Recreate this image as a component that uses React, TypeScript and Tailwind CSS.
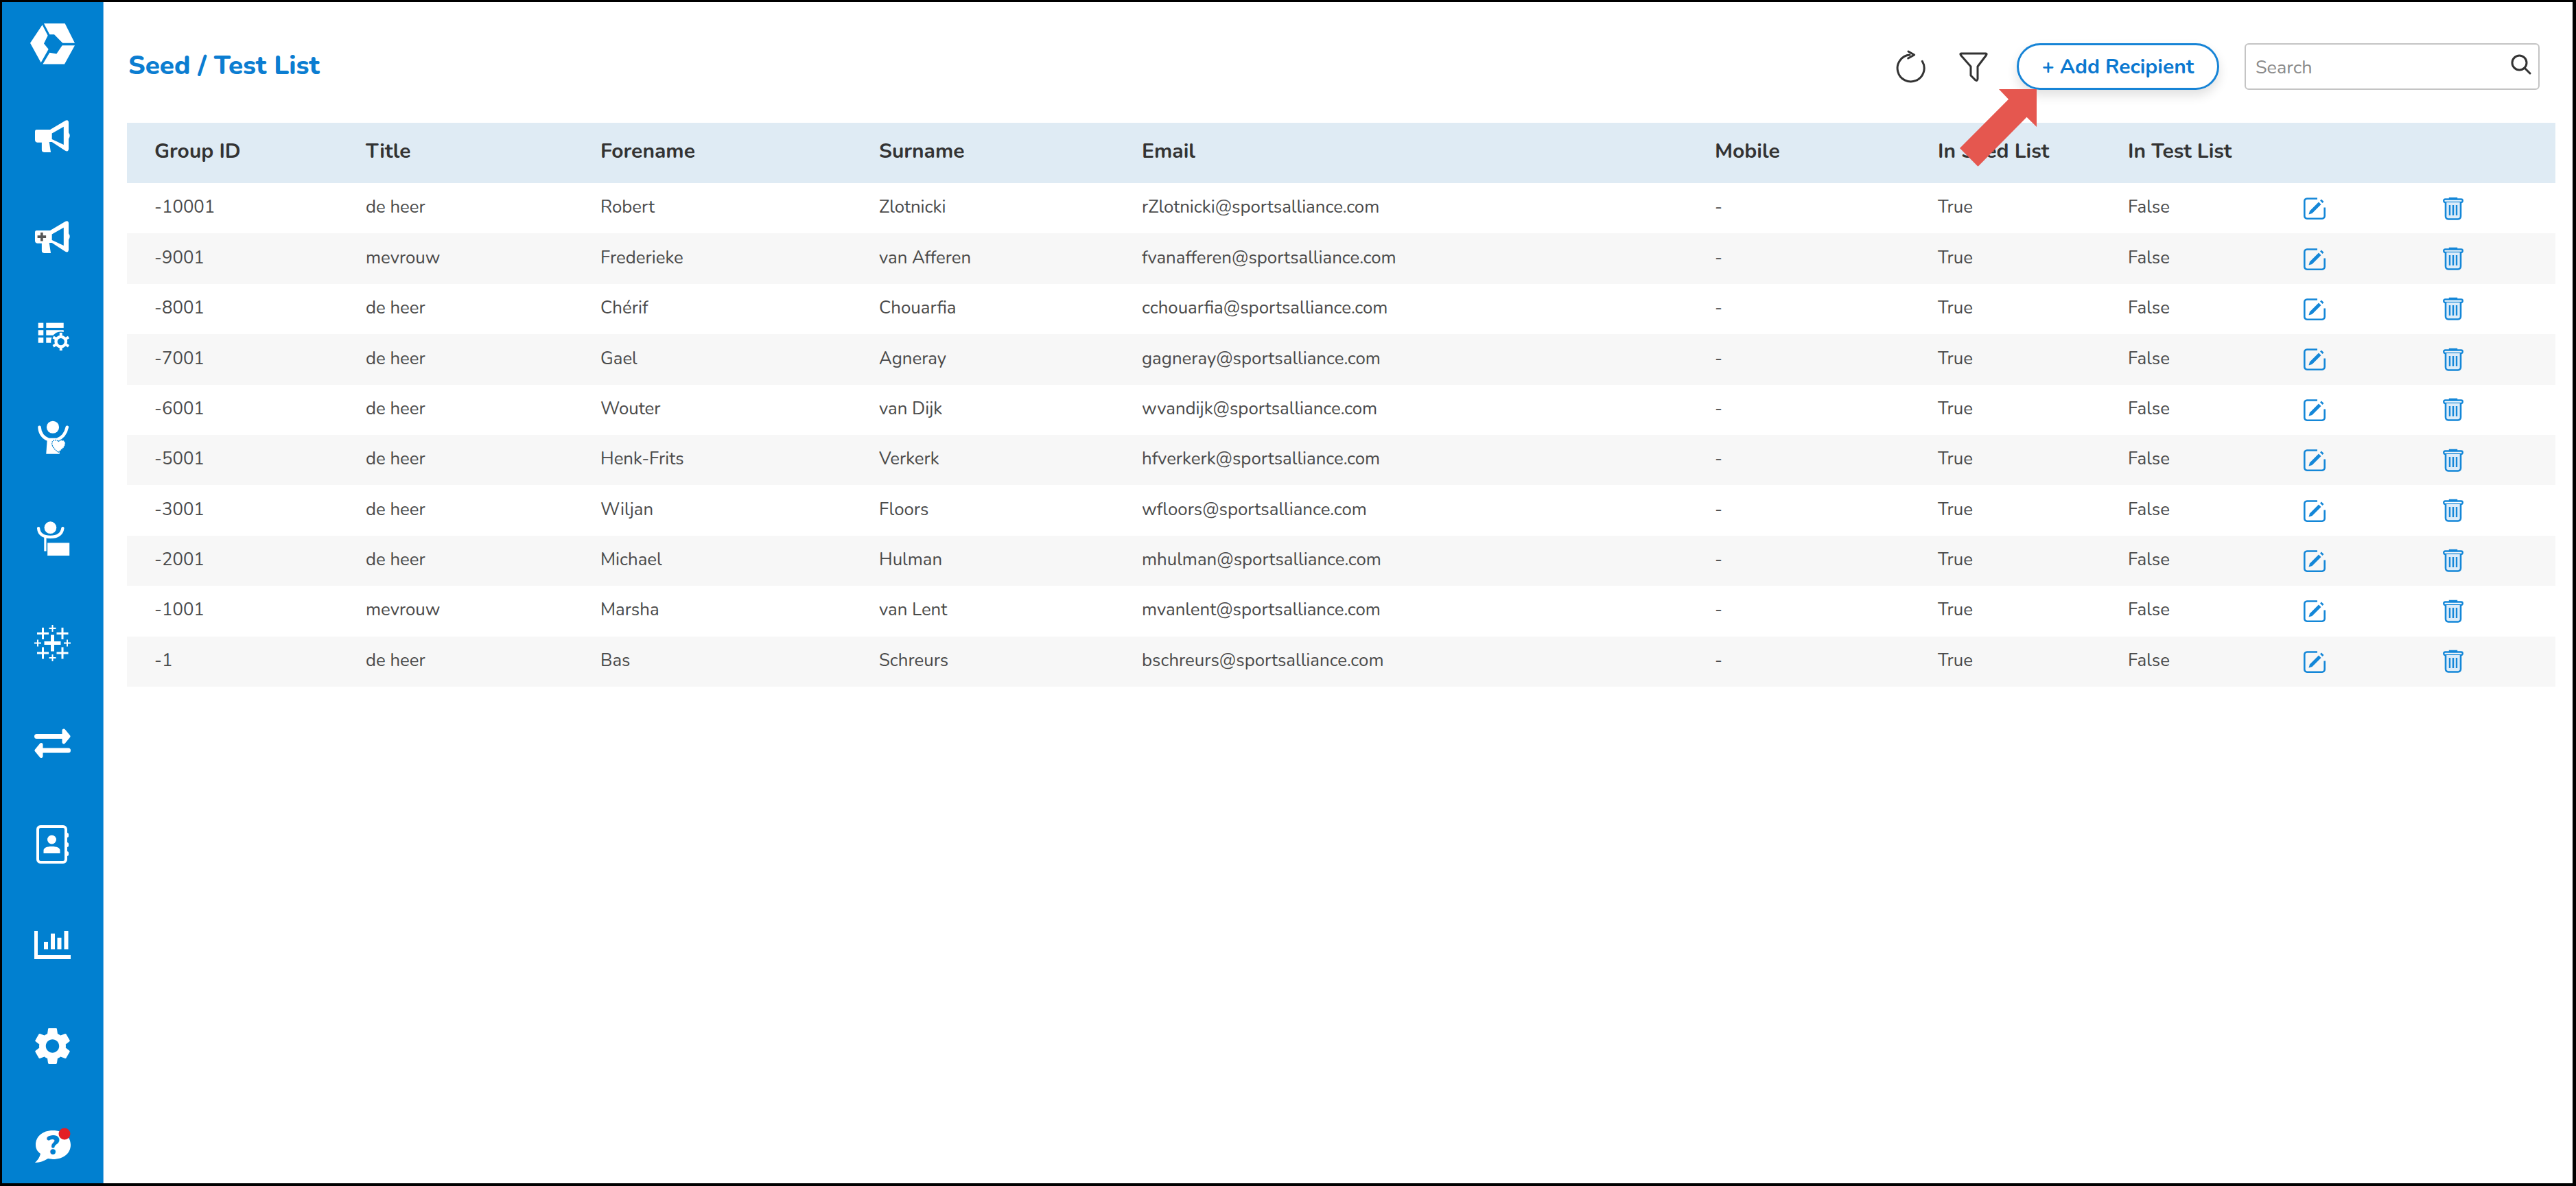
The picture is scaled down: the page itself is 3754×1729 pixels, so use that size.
import React from "react";

const rows = [
  ["-10001", "de heer", "Robert", "Zlotnicki", "rZlotnicki@sportsalliance.com"],
  ["-9001", "mevrouw", "Frederieke", "van Afferen", "fvanafferen@sportsalliance.com"],
  ["-8001", "de heer", "Chérif", "Chouarfia", "cchouarfia@sportsalliance.com"],
  ["-7001", "de heer", "Gael", "Agneray", "gagneray@sportsalliance.com"],
  ["-6001", "de heer", "Wouter", "van Dijk", "wvandijk@sportsalliance.com"],
  ["-5001", "de heer", "Henk-Frits", "Verkerk", "hfverkerk@sportsalliance.com"],
  ["-3001", "de heer", "Wiljan", "Floors", "wfloors@sportsalliance.com"],
  ["-2001", "de heer", "Michael", "Hulman", "mhulman@sportsalliance.com"],
  ["-1001", "mevrouw", "Marsha", "van Lent", "mvanlent@sportsalliance.com"],
  ["-1", "de heer", "Bas", "Schreurs", "bschreurs@sportsalliance.com"],
];

const cols = "grid grid-cols-[308px_342px_406px_383px_835px_325px_277px_256px_203px_1fr] pl-[40px] items-center";

const MEGA =
  "M72 105H132L200 65Q214 60 214 75V118Q224 132 214 146V192Q212 206 198 198L140 160H128L135 205H105Q95 205 95 195V162H75Q65 160 65 150V115Q65 105 72 105ZM140 122V148L192 172V92Z";

function Logo() {
  return (
    <svg viewBox="42 40 201 183" className="w-[67px] h-[62px] fill-white">
      <path d="M98 48L122 95L105 130L125 155L92 213L45 128Z" />
      <path d="M105 42H197L240 128H187L150 90H130Z" />
      <path d="M240 138L195 220H100L130 170L160 175L185 138Z" />
    </svg>
  );
}

function Megaphone({ plus }: { plus?: boolean }) {
  return (
    <svg viewBox="62 60 164 148" className="w-[54px] h-[49px]">
      <path d={MEGA} fill="#fff" fillRule="evenodd" />
      {plus && <path d="M95 114V152M76 133H114" stroke="#555" strokeWidth="11" />}
    </svg>
  );
}

function TableGear() {
  return (
    <svg viewBox="78 513 142 124" className="w-[47px] h-[41px] fill-white">
      <rect x="80" y="515" width="23" height="22" />
      <rect x="115" y="515" width="77" height="22" />
      <rect x="80" y="547" width="23" height="23" />
      <rect x="115" y="547" width="77" height="23" />
      <rect x="80" y="580" width="23" height="23" />
      <rect x="115" y="580" width="40" height="23" />
      <circle cx="180" cy="598" r="44" fill="#0180d0" />
      <circle cx="180" cy="598" r="22" fill="none" stroke="#fff" strokeWidth="13" />
      <path
        d="M180 558V572M180 624V638M146 578L158 585M202 611L214 618M146 618L158 611M202 585L214 578"
        stroke="#fff"
        strokeWidth="12"
      />
    </svg>
  );
}

function PersonHeart() {
  return (
    <svg viewBox="70 40 140 160" className="w-[46px] h-[52px]">
      <circle cx="140" cy="70" r="28" fill="#fff" />
      <path d="M80 70C82 100 100 118 120 126H160C180 118 198 100 204 70" fill="none" stroke="#fff" strokeWidth="14" strokeLinecap="round" />
      <path d="M115 120H165L170 190H110Z" fill="#fff" />
      <path d="M165 182C150 172 136 158 136 142C136 128 156 122 165 135C174 122 196 128 196 142C196 158 180 172 165 182Z" fill="#fff" stroke="#0180d0" strokeWidth="4" strokeDasharray="6 3" />
    </svg>
  );
}

function PersonBoard() {
  return (
    <svg viewBox="76 482 146 156" className="w-[48px] h-[51px] fill-white">
      <circle cx="135" cy="510" r="27" />
      <path d="M82 513C84 540 105 552 135 552C165 552 186 540 190 513" fill="none" stroke="#fff" strokeWidth="13" strokeLinecap="round" />
      <rect x="107" y="552" width="10" height="63" />
      <rect x="122" y="578" width="98" height="57" />
    </svg>
  );
}

function Tableau() {
  const plus = (cx: number, cy: number, h: number, t: number) =>
    `M${cx - h} ${cy - t / 2}H${cx - t / 2}V${cy - h}H${cx + t / 2}V${cy - t / 2}H${cx + h}V${cy + t / 2}H${cx + t / 2}V${cy + h}H${cx - t / 2}V${cy + t / 2}H${cx - h}Z`;
  const d = [
    plus(26.5, 26.5, 12, 5),
    plus(12.5, 12.5, 8.5, 3),
    plus(41, 12.5, 8.5, 3),
    plus(12.5, 41, 8.5, 3),
    plus(41, 41, 8.5, 3),
    plus(26.5, 5, 5, 2),
    plus(26.5, 48, 5, 2),
    plus(5, 26.5, 5, 2),
    plus(48, 26.5, 5, 2),
  ].join("");
  return (
    <svg viewBox="0 0 53 53" className="w-[53px] h-[53px] fill-white">
      <path d={d} />
    </svg>
  );
}

function Arrows() {
  return (
    <svg viewBox="0 0 53 43" className="w-[53px] h-[43px]" fill="none" stroke="#fff" strokeLinecap="round" strokeLinejoin="round">
      <path d="M3.5 11.5H44" strokeWidth="7" />
      <path d="M43 3L50 11.5L43 20Z" strokeWidth="5" fill="#fff" />
      <path d="M49.5 32H9" strokeWidth="7" />
      <path d="M10 23.5L3 32L10 40.5Z" strokeWidth="5" fill="#fff" />
    </svg>
  );
}

function Contact() {
  return (
    <svg viewBox="0 0 48 56" className="w-[48px] h-[56px] fill-white">
      <rect x="2" y="2" width="41" height="52" rx="4" fill="none" stroke="#fff" strokeWidth="4" />
      <rect x="42" y="11" width="5" height="7" rx="2.5" />
      <rect x="42" y="25" width="5" height="7" rx="2.5" />
      <rect x="42" y="38" width="5" height="7" rx="2.5" />
      <circle cx="22.5" cy="21" r="6.5" />
      <path d="M10.5 41V37C10.5 33 15 31 22.5 31C30 31 34.5 33 34.5 37V41Z" />
    </svg>
  );
}

function Chart() {
  return (
    <svg viewBox="0 0 53 41" className="w-[53px] h-[41px] fill-white">
      <path d="M0 0H5V35H53V41H0Z" />
      <rect x="14" y="16" width="6" height="11" />
      <rect x="24" y="4" width="6" height="23" />
      <rect x="33.5" y="10" width="6" height="17" />
      <rect x="43.5" y="0" width="6" height="27" />
    </svg>
  );
}

function Gear() {
  return (
    <svg viewBox="2.6 2 18.8 20" className="w-[51px] h-[54px] fill-white">
      <path d="M19.14 12.94c.04-.3.06-.61.06-.94 0-.32-.02-.64-.07-.94l2.03-1.58c.18-.14.23-.41.12-.61l-1.92-3.32c-.12-.22-.37-.29-.59-.22l-2.39.96c-.5-.38-1.03-.7-1.62-.94l-.36-2.54c-.04-.24-.24-.41-.48-.41h-3.84c-.24 0-.43.17-.47.41l-.36 2.54c-.59.24-1.13.57-1.62.94l-2.39-.96c-.22-.08-.47 0-.59.22L2.74 8.87c-.12.21-.08.47.12.61l2.03 1.58c-.05.3-.09.63-.09.94s.02.64.07.94l-2.03 1.58c-.18.14-.23.41-.12.61l1.92 3.32c.12.22.37.29.59.22l2.39-.96c.5.38 1.03.7 1.62.94l.36 2.54c.05.24.24.41.48.41h3.84c.24 0 .44-.17.47-.41l.36-2.54c.59-.24 1.13-.56 1.62-.94l2.39.96c.22.08.47 0 .59-.22l1.92-3.32c.12-.22.07-.47-.12-.61l-2.01-1.58zM12 15.6c-1.98 0-3.6-1.62-3.6-3.6s1.62-3.6 3.6-3.6 3.6 1.62 3.6 3.6-1.62 3.6-3.6 3.6z" />
    </svg>
  );
}

function Help() {
  return (
    <svg viewBox="0 0 53 52" className="w-[53px] h-[52px]">
      <path d="M26 4C11 4 1 13 1 25C1 31 4 35 8 38C7 43 4 47 0 51C7 51 14 48 19 45C21 45 24 46 26 46C42 46 52 37 52 25C52 13 42 4 26 4Z" fill="#fff" />
      <text x="26" y="39" textAnchor="middle" fontFamily="Nunito, Lato, sans-serif" fontWeight="900" fontSize="39" fill="#0180d0">?</text>
      <circle cx="43" cy="9" r="8.5" fill="#e31e24" />
    </svg>
  );
}

function EditIcon() {
  return (
    <svg viewBox="0 0 32 32" className="w-[32px] h-[32px] mt-[3px]" fill="none" stroke="#1487d8">
      <path d="M20 1.500H5A3.800 3.800 0 0 0 1.300 5.500V27A3.800 3.800 0 0 0 5 30.700H27A3.800 3.800 0 0 0 30.700 27V14.500" strokeWidth="2.600" />
      <path d="M7.500 24.500L9 19.500L22 6.500L25.500 10L12.500 23Z" fill="#1487d8" stroke="none" />
      <path d="M24 4.500L26 2.500L29.500 6L27.500 8Z" fill="#1487d8" stroke="none" />
    </svg>
  );
}

function TrashIcon() {
  return (
    <svg viewBox="0 0 30 34" className="w-[30px] h-[34px] mt-[2px]" fill="none" stroke="#1487d8">
      <path d="M10 3V2H20V3" strokeWidth="2.400" />
      <rect x="1.200" y="3.500" width="27.600" height="4.500" rx="2.200" strokeWidth="2.400" />
      <path d="M4 8V28A4 4 0 0 0 8 32.500H22A4 4 0 0 0 26 28V8" strokeWidth="2.600" fill="#dcecf9" />
      <path d="M10 12V27M15 12V27M20 12V27" strokeWidth="2.400" />
    </svg>
  );
}

export default function App() {
  return (
    <div className="w-[3754px] h-[1729px] flex bg-white border-t-[3px] border-l-[3px] border-r-[5px] border-b-[4px] border-black overflow-hidden font-['Nunito','Lato',sans-serif]">
      <aside className="w-[148px] shrink-0 h-full bg-[#0180d0] border-r border-r-[#5aa9e0] flex flex-col items-center">
        <div className="mt-[30px]"><Logo /></div>
        <div className="mt-[79px]"><Megaphone /></div>
        <div className="mt-[98px]"><Megaphone plus /></div>
        <div className="mt-[100px] ml-[3px]"><TableGear /></div>
        <div className="mt-[102px]"><PersonHeart /></div>
        <div className="mt-[95px] ml-[3px]"><PersonBoard /></div>
        <div className="mt-[100px]"><Tableau /></div>
        <div className="mt-[98px]"><Arrows /></div>
        <div className="mt-[98px]"><Contact /></div>
        <div className="mt-[98px]"><Chart /></div>
        <div className="mt-[100px]"><Gear /></div>
        <div className="mt-[92px] ml-[1px]"><Help /></div>
      </aside>

      <main className="relative flex-1 pl-[34px] pr-[25px] pt-[60px]">
        <header className="flex items-center h-[68px]">
          <h1 className="ml-[2px] text-[38.5px] font-extrabold text-[#0b7dd1] leading-none pb-[2px]">Seed / Test List</h1>
          <div className="ml-auto mr-[23px] flex items-center">
            <svg viewBox="0 0 44 50" className="w-[44px] h-[50px]" fill="none" stroke="#333" strokeWidth="3" strokeLinecap="round" strokeLinejoin="round">
              <path d="M20 8A19.500 19.500 0 1 0 38.300 17.300" />
              <path d="M18 3L26.700 8L17.700 13" />
            </svg>
            <svg viewBox="0 0 42 46" className="w-[42px] h-[46px] ml-[48px]" fill="none" stroke="#333" strokeWidth="3" strokeLinejoin="round" strokeLinecap="round">
              <path d="M3 4H39Q41 4 39.500 6.500L27 23V41Q26 46 22 41L17 36V23L2.500 6.500Q1 4 3 4Z" />
            </svg>
            <button className="ml-[42px] w-[295px] h-[68px] rounded-full border-[3px] border-[#1784d6] bg-white text-[#0b78d0] text-[30px] font-bold shadow-[0_8px_16px_rgba(0,0,0,0.12)]">
              + Add Recipient
            </button>
            <div className="ml-[37px] w-[430px] h-[68px] flex items-center rounded-[6px] border-2 border-[#c4c4c4] pl-[14px] pr-[10px] text-[27px] text-[#8a8a8a]">
              <span className="pt-[4px]">Search</span>
              <svg viewBox="0 0 30 30" className="ml-auto w-[30px] h-[30px] mb-[6px]" fill="none" stroke="#333" strokeWidth="3" strokeLinecap="round">
                <circle cx="12.500" cy="12.500" r="10.500" />
                <path d="M20.500 20.500L28 28" />
              </svg>
            </div>
          </div>
        </header>

        <section className="mt-[48px]">
          <div className={`${cols} h-[88px] bg-[#dfebf4] text-[30px] font-bold text-[#333] pb-[6px]`}>
            <span>Group ID</span>
            <span>Title</span>
            <span>Forename</span>
            <span>Surname</span>
            <span>Email</span>
            <span>Mobile</span>
            <span>In Seed List</span>
            <span>In Test List</span>
          </div>
          {rows.map((r, i) => (
            <div key={r[0]} className={`${cols} h-[73.4px] text-[25.8px] text-[#4a4a4a] pb-[2px] ${i % 2 === 1 ? "bg-[#f7f7f7]" : "bg-white"}`}>
              {r.map((c) => (
                <span key={c}>{c}</span>
              ))}
              <span>-</span>
              <span>True</span>
              <span>False</span>
              <EditIcon />
              <TrashIcon />
            </div>
          ))}
        </section>

        <svg viewBox="0 0 112 113" className="absolute left-[2705px] top-[127px] w-[112px] h-[113px]">
          <path d="M57 0H112V55L97.500 40.700L26.500 112.700L0 86L71 14.700Z" fill="#e5574f" />
        </svg>
      </main>
    </div>
  );
}
